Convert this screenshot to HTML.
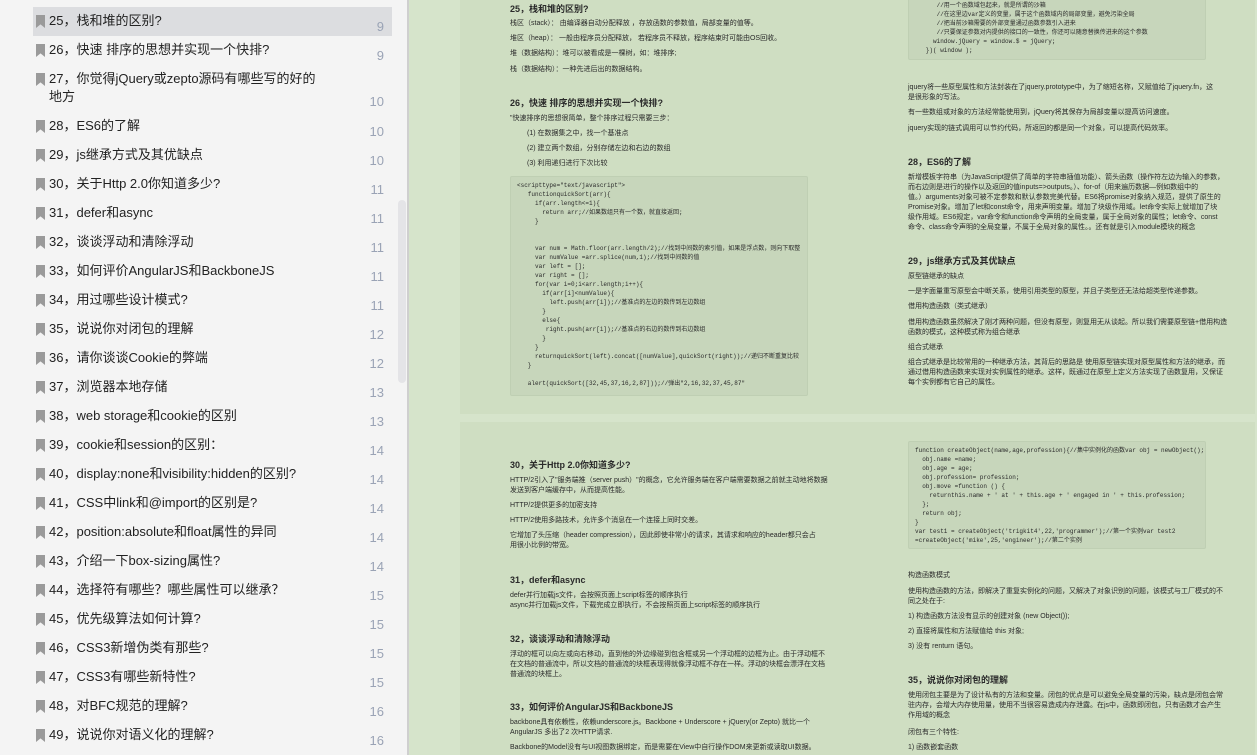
<!DOCTYPE html>
<html><head><meta charset="utf-8"><style>
*{margin:0;padding:0;box-sizing:border-box}
body{width:1257px;height:755px;overflow:hidden;background:#d6e4cb;font-family:"Liberation Sans","Noto Sans CJK SC",sans-serif;position:relative}
#side{position:absolute;left:0;top:0;width:407px;height:755px;background:#f4f4f4}
#div{position:absolute;left:407px;top:0;width:2px;height:755px;background:#cfcfcf}
.row{position:absolute;left:33px;width:359px;font-size:13px;color:#222}
.row.sel{background:#dcdde0}
.row .bm{position:absolute;left:3px;width:9px;height:13px;background:#9a9a9a;clip-path:polygon(0 0,100% 0,100% 100%,50% 72%,0 100%)}
.row .t{position:absolute;left:16px;line-height:18px}
.row .n{position:absolute;right:8px;color:#9aa3b5;font-size:13px}
#thumb{position:absolute;left:398px;top:200px;width:8px;height:183px;background:#e4e4e7;border-radius:4px}
.pg{position:absolute;left:460px;width:795px;background:#cfdec2}
.p{position:absolute;font-size:7px;color:#2a2a2a;line-height:10px;white-space:nowrap}
.h{position:absolute;font-size:9px;font-weight:bold;color:#2a2a2a;white-space:nowrap}
.code{position:absolute;background:#c7d6bb;border:1px solid #bfcfb3;border-radius:2px;font-family:"Liberation Mono","Noto Sans CJK SC",monospace;font-size:6px;line-height:9px;color:#2a2a2a;white-space:pre;padding:4px 6px}
</style></head><body>
<div id="side">
<div class="row sel" style="top:7px;height:29px"><span class="bm" style="top:8px"></span><span class="t" style="top:5px">25，栈和堆的区别?</span><span class="n" style="top:12px">9</span></div>
<div class="row" style="top:36px;height:29px"><span class="bm" style="top:8px"></span><span class="t" style="top:5px">26，快速 排序的思想并实现一个快排?</span><span class="n" style="top:12px">9</span></div>
<div class="row" style="top:65px;height:47px"><span class="bm" style="top:8px"></span><span class="t" style="top:5px">27，你觉得jQuery或zepto源码有哪些写的好的<br>地方</span><span class="n" style="top:29px">10</span></div>
<div class="row" style="top:112px;height:29px"><span class="bm" style="top:8px"></span><span class="t" style="top:5px">28，ES6的了解</span><span class="n" style="top:12px">10</span></div>
<div class="row" style="top:141px;height:29px"><span class="bm" style="top:8px"></span><span class="t" style="top:5px">29，js继承方式及其优缺点</span><span class="n" style="top:12px">10</span></div>
<div class="row" style="top:170px;height:29px"><span class="bm" style="top:8px"></span><span class="t" style="top:5px">30，关于Http 2.0你知道多少?</span><span class="n" style="top:12px">11</span></div>
<div class="row" style="top:199px;height:29px"><span class="bm" style="top:8px"></span><span class="t" style="top:5px">31，defer和async</span><span class="n" style="top:12px">11</span></div>
<div class="row" style="top:228px;height:29px"><span class="bm" style="top:8px"></span><span class="t" style="top:5px">32，谈谈浮动和清除浮动</span><span class="n" style="top:12px">11</span></div>
<div class="row" style="top:257px;height:29px"><span class="bm" style="top:8px"></span><span class="t" style="top:5px">33，如何评价AngularJS和BackboneJS</span><span class="n" style="top:12px">11</span></div>
<div class="row" style="top:286px;height:29px"><span class="bm" style="top:8px"></span><span class="t" style="top:5px">34，用过哪些设计模式?</span><span class="n" style="top:12px">11</span></div>
<div class="row" style="top:315px;height:29px"><span class="bm" style="top:8px"></span><span class="t" style="top:5px">35，说说你对闭包的理解</span><span class="n" style="top:12px">12</span></div>
<div class="row" style="top:344px;height:29px"><span class="bm" style="top:8px"></span><span class="t" style="top:5px">36，请你谈谈Cookie的弊端</span><span class="n" style="top:12px">12</span></div>
<div class="row" style="top:373px;height:29px"><span class="bm" style="top:8px"></span><span class="t" style="top:5px">37，浏览器本地存储</span><span class="n" style="top:12px">13</span></div>
<div class="row" style="top:402px;height:29px"><span class="bm" style="top:8px"></span><span class="t" style="top:5px">38，web storage和cookie的区别</span><span class="n" style="top:12px">13</span></div>
<div class="row" style="top:431px;height:29px"><span class="bm" style="top:8px"></span><span class="t" style="top:5px">39，cookie和session的区别：</span><span class="n" style="top:12px">14</span></div>
<div class="row" style="top:460px;height:29px"><span class="bm" style="top:8px"></span><span class="t" style="top:5px">40，display:none和visibility:hidden的区别?</span><span class="n" style="top:12px">14</span></div>
<div class="row" style="top:489px;height:29px"><span class="bm" style="top:8px"></span><span class="t" style="top:5px">41，CSS中link和@import的区别是?</span><span class="n" style="top:12px">14</span></div>
<div class="row" style="top:518px;height:29px"><span class="bm" style="top:8px"></span><span class="t" style="top:5px">42，position:absolute和float属性的异同</span><span class="n" style="top:12px">14</span></div>
<div class="row" style="top:547px;height:29px"><span class="bm" style="top:8px"></span><span class="t" style="top:5px">43，介绍一下box-sizing属性?</span><span class="n" style="top:12px">14</span></div>
<div class="row" style="top:576px;height:29px"><span class="bm" style="top:8px"></span><span class="t" style="top:5px">44，选择符有哪些？哪些属性可以继承？</span><span class="n" style="top:12px">15</span></div>
<div class="row" style="top:605px;height:29px"><span class="bm" style="top:8px"></span><span class="t" style="top:5px">45，优先级算法如何计算?</span><span class="n" style="top:12px">15</span></div>
<div class="row" style="top:634px;height:29px"><span class="bm" style="top:8px"></span><span class="t" style="top:5px">46，CSS3新增伪类有那些?</span><span class="n" style="top:12px">15</span></div>
<div class="row" style="top:663px;height:29px"><span class="bm" style="top:8px"></span><span class="t" style="top:5px">47，CSS3有哪些新特性?</span><span class="n" style="top:12px">15</span></div>
<div class="row" style="top:692px;height:29px"><span class="bm" style="top:8px"></span><span class="t" style="top:5px">48，对BFC规范的理解?</span><span class="n" style="top:12px">16</span></div>
<div class="row" style="top:721px;height:29px"><span class="bm" style="top:8px"></span><span class="t" style="top:5px">49，说说你对语义化的理解?</span><span class="n" style="top:12px">16</span></div>
<div id="thumb"></div>
</div>
<div id="div"></div>

<div class="pg" style="top:0;height:414px"></div>
<div class="pg" style="top:422px;height:333px"></div>

<div class="h" style="left:510px;top:2px">25，栈和堆的区别?</div>
<div class="p" style="left:510px;top:19px">栈区（stack）： 由编译器自动分配释放 ，存放函数的参数值，局部变量的值等。</div>
<div class="p" style="left:510px;top:34px">堆区（heap）： 一般由程序员分配释放， 若程序员不释放，程序结束时可能由OS回收。</div>
<div class="p" style="left:510px;top:49px">堆（数据结构）：堆可以被看成是一棵树，如：堆排序;</div>
<div class="p" style="left:510px;top:65px">栈（数据结构）：一种先进后出的数据结构。</div>
<div class="h" style="left:510px;top:96px">26，快速 排序的思想并实现一个快排?</div>
<div class="p" style="left:510px;top:114px">"快速排序的思想很简单，整个排序过程只需要三步：</div>
<div class="p" style="left:527px;top:129px">(1) 在数据集之中，找一个基准点</div>
<div class="p" style="left:527px;top:144px">(2) 建立两个数组，分别存储左边和右边的数组</div>
<div class="p" style="left:527px;top:159px">(3) 利用递归进行下次比较</div>
<div class="code" style="left:510px;top:176px;width:298px;height:220px">&lt;scripttype="text/javascript"&gt;
   functionquickSort(arr){
     if(arr.length&lt;=1){
       return arr;//如果数组只有一个数，就直接返回;
     }


     var num = Math.floor(arr.length/2);//找到中间数的索引值，如果是浮点数，则向下取整
     var numValue =arr.splice(num,1);//找到中间数的值
     var left = [];
     var right = [];
     for(var i=0;i&lt;arr.length;i++){
       if(arr[i]&lt;numValue){
         left.push(arr[i]);//基准点的左边的数传到左边数组
       }
       else{
        right.push(arr[i]);//基准点的右边的数传到右边数组
       }
     }
     returnquickSort(left).concat([numValue],quickSort(right));//递归不断重复比较
   }

   alert(quickSort([32,45,37,16,2,87]));//弹出"2,16,32,37,45,87"</div>

<div class="code" style="left:908px;top:-4px;width:298px;height:64px">      //用一个函数域包起来，就是所谓的沙箱
      //在这里边var定义的变量，属于这个函数域内的局部变量，避免污染全局
      //把当前沙箱需要的外部变量通过函数参数引入进来
      //只要保证参数对内提供的接口的一致性，你还可以随意替换传进来的这个参数
     window.jQuery = window.$ = jQuery;
   })( window );</div>
<div class="p" style="left:908px;top:83px">jquery将一些原型属性和方法封装在了jquery.prototype中，为了缩短名称，又赋值给了jquery.fn，这<br>是很形象的写法。</div>
<div class="p" style="left:908px;top:108px">有一些数组或对象的方法经常能使用到，jQuery将其保存为局部变量以提高访问速度。</div>
<div class="p" style="left:908px;top:124px">jquery实现的链式调用可以节约代码，所返回的都是同一个对象，可以提高代码效率。</div>
<div class="h" style="left:908px;top:155px">28，ES6的了解</div>
<div class="p" style="left:908px;top:173px">新增模板字符串（为JavaScript提供了简单的字符串插值功能）、箭头函数（操作符左边为输入的参数，<br>而右边则是进行的操作以及返回的值inputs=&gt;outputs。）、for-of（用来遍历数据—例如数组中的<br>值。）arguments对象可被不定参数和默认参数完美代替。ES6将promise对象纳入规范，提供了原生的<br>Promise对象。增加了let和const命令，用来声明变量。增加了块级作用域。let命令实际上就增加了块<br>级作用域。ES6规定，var命令和function命令声明的全局变量，属于全局对象的属性；let命令、const<br>命令、class命令声明的全局变量，不属于全局对象的属性。。还有就是引入module模块的概念</div>
<div class="h" style="left:908px;top:254px">29，js继承方式及其优缺点</div>
<div class="p" style="left:908px;top:272px">原型链继承的缺点</div>
<div class="p" style="left:908px;top:287px">一是字面量重写原型会中断关系，使用引用类型的原型，并且子类型还无法给超类型传递参数。</div>
<div class="p" style="left:908px;top:302px">借用构造函数（类式继承）</div>
<div class="p" style="left:908px;top:318px">借用构造函数虽然解决了刚才两种问题，但没有原型，则复用无从谈起。所以我们需要原型链+借用构造<br>函数的模式，这种模式称为组合继承</div>
<div class="p" style="left:908px;top:343px">组合式继承</div>
<div class="p" style="left:908px;top:358px">组合式继承是比较常用的一种继承方法，其背后的思路是 使用原型链实现对原型属性和方法的继承，而<br>通过借用构造函数来实现对实例属性的继承。这样，既通过在原型上定义方法实现了函数复用，又保证<br>每个实例都有它自己的属性。</div>

<div class="h" style="left:510px;top:458px">30，关于Http 2.0你知道多少?</div>
<div class="p" style="left:510px;top:476px">HTTP/2引入了"服务端推（server push）"的概念，它允许服务端在客户端需要数据之前就主动地将数据<br>发送到客户端缓存中，从而提高性能。</div>
<div class="p" style="left:510px;top:501px">HTTP/2提供更多的加密支持</div>
<div class="p" style="left:510px;top:516px">HTTP/2使用多路技术，允许多个消息在一个连接上同时交差。</div>
<div class="p" style="left:510px;top:531px">它增加了头压缩（header compression），因此即使非常小的请求，其请求和响应的header都只会占<br>用很小比例的带宽。</div>
<div class="h" style="left:510px;top:573px">31，defer和async</div>
<div class="p" style="left:510px;top:591px">defer并行加载js文件，会按照页面上script标签的顺序执行<br>async并行加载js文件，下载完成立即执行，不会按照页面上script标签的顺序执行</div>
<div class="h" style="left:510px;top:632px">32，谈谈浮动和清除浮动</div>
<div class="p" style="left:510px;top:650px">浮动的框可以向左或向右移动，直到他的外边缘碰到包含框或另一个浮动框的边框为止。由于浮动框不<br>在文档的普通流中，所以文档的普通流的块框表现得就像浮动框不存在一样。浮动的块框会漂浮在文档<br>普通流的块框上。</div>
<div class="h" style="left:510px;top:700px">33，如何评价AngularJS和BackboneJS</div>
<div class="p" style="left:510px;top:718px">backbone具有依赖性，依赖underscore.js。Backbone + Underscore + jQuery(or Zepto) 就比一个<br>AngularJS 多出了2 次HTTP请求.</div>
<div class="p" style="left:510px;top:743px">Backbone的Model没有与UI视图数据绑定，而是需要在View中自行操作DOM来更新或读取UI数据。</div>

<div class="code" style="left:908px;top:441px;width:298px;height:108px">function createObject(name,age,profession){//集中实例化的函数var obj = newObject();
  obj.name =name;
  obj.age = age;
  obj.profession= profession;
  obj.move =function () {
    returnthis.name + ' at ' + this.age + ' engaged in ' + this.profession;
  };
  return obj;
}
var test1 = createObject('trigkit4',22,'programmer');//第一个实例var test2
=createObject('mike',25,'engineer');//第二个实例</div>
<div class="p" style="left:908px;top:571px">构造函数模式</div>
<div class="p" style="left:908px;top:587px">使用构造函数的方法，即解决了重复实例化的问题，又解决了对象识别的问题，该模式与工厂模式的不<br>同之处在于:</div>
<div class="p" style="left:908px;top:612px">1) 构造函数方法没有显示的创建对象 (new Object());</div>
<div class="p" style="left:908px;top:627px">2) 直接将属性和方法赋值给 this 对象;</div>
<div class="p" style="left:908px;top:642px">3) 没有 renturn 语句。</div>
<div class="h" style="left:908px;top:673px">35，说说你对闭包的理解</div>
<div class="p" style="left:908px;top:691px">使用闭包主要是为了设计私有的方法和变量。闭包的优点是可以避免全局变量的污染，缺点是闭包会常<br>驻内存，会增大内存使用量，使用不当很容易造成内存泄露。在js中，函数即闭包，只有函数才会产生<br>作用域的概念</div>
<div class="p" style="left:908px;top:728px">闭包有三个特性:</div>
<div class="p" style="left:908px;top:743px">1) 函数嵌套函数</div>
</body></html>
